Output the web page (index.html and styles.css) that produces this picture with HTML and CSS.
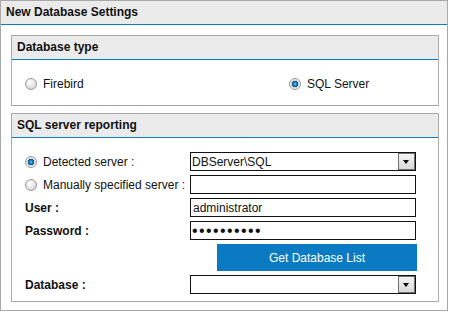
FILE: index.html
```html
<!doctype html>
<html>
<head>
	<meta charset="utf-8">
	<title>New Database Settings</title>
	<link rel="stylesheet" href="styles.css">
</head>
<body>
	<div class="panel">
		<div class="panel-head">New Database Settings</div>
		<div class="panel-body">
			<div class="box">
				<div class="box-head">Database type</div>
				<div class="box-body type-row">
					<label class="opt"><input type="radio" name="dbtype"> Firebird</label>
					<label class="opt"><input type="radio" name="dbtype" checked> SQL Server</label>
				</div>
			</div>
			<div class="box">
				<div class="box-head">SQL server reporting</div>
				<div class="box-body form">
					<label class="opt"><input type="radio" name="srv" checked> Detected server :</label>
					<div class="combo">
						<select><option>DBServer\SQL</option></select>
						<span class="arrow"></span>
					</div>
					<label class="opt"><input type="radio" name="srv"> Manually specified server :</label>
					<input type="text" class="field">
					<span class="lbl">User :</span>
					<input type="text" class="field" value="administrator">
					<span class="lbl">Password :</span>
					<input type="password" class="field pass" value="1234567890">
					<span></span>
					<button class="btn">Get Database List</button>
					<span class="lbl">Database :</span>
					<div class="combo">
						<select><option></option></select>
						<span class="arrow"></span>
					</div>
				</div>
			</div>
		</div>
	</div>
</body>
</html>
```

FILE: styles.css
```css
body {
	margin: 0;
	font-family: "Liberation Sans", Arial, sans-serif;
	font-size: 12px;
	color: #111;
	background: #fff;
}
.panel {
	width: 448px;
	height: 311px;
	box-sizing: border-box;
	border: 1px solid #a9a9a9;
}
.panel-head {
	height: 23px;
	line-height: 23px;
	padding-left: 5px;
	background: #ebebeb;
	border-bottom: 1px solid #0a7bc2;
	font-weight: bold;
}
.panel-body {
	padding: 10px 8px 0 10px;
}
.box {
	border: 1px solid #a9a9a9;
	margin-bottom: 7px;
}
.box-head {
	height: 23px;
	line-height: 23px;
	padding-left: 5px;
	background: #ebebeb;
	border-bottom: 1px solid #0a7bc2;
	font-weight: bold;
}
.type-row {
	display: grid;
	grid-template-columns: 264px auto;
	padding: 18px 0 15px 13px;
}
.opt {
	display: flex;
	align-items: center;
	gap: 6px;
	height: 12px;
	white-space: nowrap;
}
.opt input {
	appearance: none;
	margin: 0;
	width: 12px;
	height: 12px;
	border-radius: 50%;
	border: 1px solid #9a9a9a;
	box-sizing: border-box;
	background: radial-gradient(circle at 40% 35%, #fff 0, #e4e4e4 55%, #c4c4c4 100%);
}
.opt input:checked {
	background: radial-gradient(circle closest-side, #6cc4f6 0, #1a7fc4 35%, #0c4f86 58%, #cfcfcf 66%, #f2f2f2 100%);
}
.form {
	display: grid;
	grid-template-columns: 165px 226px;
	grid-template-rows: 19px 19px 19px 19px 27px 19px;
	row-gap: 4px;
	align-items: center;
	padding: 14px 0 7px 13px;
}
.lbl {
	font-weight: bold;
}
.field, .combo select {
	width: 226px;
	height: 19px;
	box-sizing: border-box;
	border: 1px solid #111;
	padding: 0 2px;
	margin: 0;
	font: inherit;
	color: #111;
	background: #fff;
	outline: none;
}
.pass {
	font-size: 16px;
	letter-spacing: 1.4px;
	padding-left: 1px;
}
.combo {
	position: relative;
	height: 19px;
}
.combo select {
	appearance: none;
	border-radius: 0;
	padding-left: 1px;
}
.arrow {
	position: absolute;
	top: 1px;
	right: 1px;
	width: 15px;
	height: 15px;
	border: 1px solid #707070;
	background: linear-gradient(#f4f4f4, #d8d8d8);
}
.arrow::after {
	content: "";
	position: absolute;
	left: 4px;
	top: 6px;
	border-left: 3.5px solid transparent;
	border-right: 3.5px solid transparent;
	border-top: 4px solid #000;
}
.btn {
	width: 200px;
	height: 27px;
	margin-left: 27px;
	border: none;
	background: #0a7bc2;
	color: #fff;
	font: inherit;
	font-size: 12px;
	padding: 0;
}
```
